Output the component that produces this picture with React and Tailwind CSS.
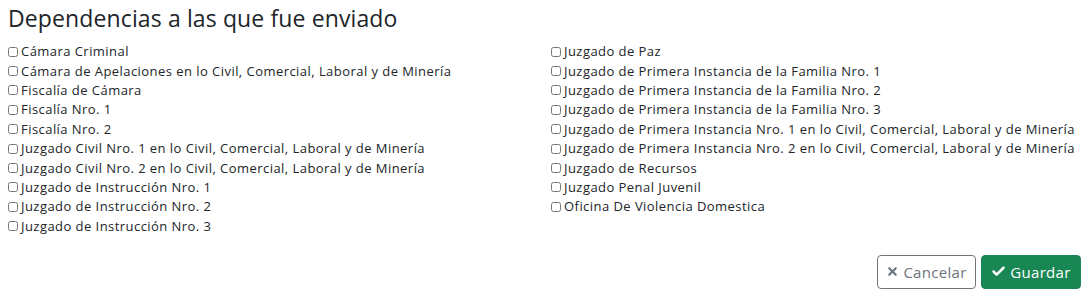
import { Check, X } from 'lucide-react';

const left = [
  'Cámara Criminal',
  'Cámara de Apelaciones en lo Civil, Comercial, Laboral y de Minería',
  'Fiscalía de Cámara',
  'Fiscalía Nro. 1',
  'Fiscalía Nro. 2',
  'Juzgado Civil Nro. 1 en lo Civil, Comercial, Laboral y de Minería',
  'Juzgado Civil Nro. 2 en lo Civil, Comercial, Laboral y de Minería',
  'Juzgado de Instrucción Nro. 1',
  'Juzgado de Instrucción Nro. 2',
  'Juzgado de Instrucción Nro. 3',
];

const right = [
  'Juzgado de Paz',
  'Juzgado de Primera Instancia de la Familia Nro. 1',
  'Juzgado de Primera Instancia de la Familia Nro. 2',
  'Juzgado de Primera Instancia de la Familia Nro. 3',
  'Juzgado de Primera Instancia Nro. 1 en lo Civil, Comercial, Laboral y de Minería',
  'Juzgado de Primera Instancia Nro. 2 en lo Civil, Comercial, Laboral y de Minería',
  'Juzgado de Recursos',
  'Juzgado Penal Juvenil',
  'Oficina De Violencia Domestica',
];

const Item = ({ label }) => (
  <label className="flex items-center h-[19.4px] text-[13px] leading-none tracking-[0.45px] text-[#212529]">
    <input type="checkbox" className="w-[10px] h-[10px] m-0" />
    <span className="ml-[3px]">{label}</span>
  </label>
);

export default function App() {
  return (
    <div className="bg-white pl-2 pr-1 pt-0 font-['Open_Sans',sans-serif] w-[1090px] h-[299px]">
      <h2 className="text-[23px] text-[#212529] leading-[28px] tracking-[0.12px] pt-[4px] mb-[10px]">Dependencias a las que fue enviado</h2>
      <div className="grid grid-cols-[543px_1fr]">
        <div>
          {left.map((l) => <Item key={l} label={l} />)}
        </div>
        <div>
          {right.map((l) => <Item key={l} label={l} />)}
        </div>
      </div>
      <div className="flex justify-end gap-[5px] mt-[19px] pr-[5px]">
        <button className="flex items-center gap-1 h-[34px] w-[99px] justify-center rounded border border-[#6c757d] text-[#6c757d] text-[15px] tracking-[0.3px]">
          <X className="w-[13px] h-[13px]" strokeWidth={4} />
          Cancelar
        </button>
        <button className="flex items-center gap-1 h-[34px] w-[100px] justify-center rounded bg-[#198754] border border-[#198754] text-white text-[15px] tracking-[0.3px]">
          <Check className="w-[15px] h-[15px]" strokeWidth={4} />
          Guardar
        </button>
      </div>
    </div>
  );
}
